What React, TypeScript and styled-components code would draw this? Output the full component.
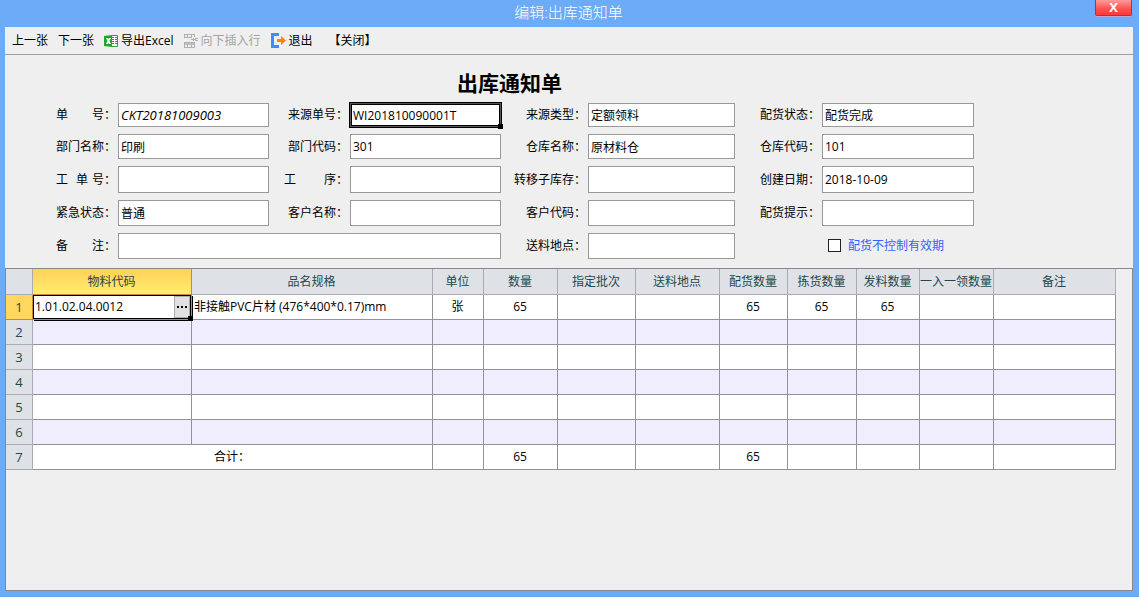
import React from "react";
import styled, { createGlobalStyle, css } from "styled-components";

const GlobalStyle = createGlobalStyle`
  *, *::before, *::after { box-sizing: border-box; }
  body {
    margin: 0;
    background: #fff;
    color: #000;
    font: 12px/16px "Open Sans", "Noto Sans CJK SC", sans-serif;
  }
  button, input { font: inherit; color: inherit; }
`;

const Window = styled.div`
  display: flex;
  flex-direction: column;
  min-height: calc(100vh - 1px);
  padding: 0 6px 6px 5px;
  background: #6cabf7;
`;

const TitleBar = styled.header`
  display: grid;
  grid-template-columns: 37px 1fr 37px;
  height: 27px;
  padding-right: 1px;
`;

const WindowTitle = styled.div`
  grid-column: 2;
  color: #fff;
  font-size: 15px;
  font-weight: 300;
  line-height: 24px;
  text-align: center;
`;

const CloseButton = styled.button`
  height: 16px;
  padding: 0;
  border: 1px solid #f01818;
  border-top: 0;
  border-radius: 0 0 2px 2px;
  background: linear-gradient(#ff9a9a, #fd5050 60%, #fb3a3a);
  box-shadow: 0 1px 0 #b9a9d6;
  color: #fff;
  font-size: 13px;
  font-weight: 700;
  line-height: 15px;
`;

const Content = styled.main`
  display: flex;
  flex: 1;
  flex-direction: column;
  background: #efefef;
`;

const Toolbar = styled.nav`
  display: flex;
  align-items: center;
  gap: 10px;
  height: 28px;
  padding-left: 7px;
  border-bottom: 1px solid #a0a0a0;
`;

const ToolButton = styled.button<{ $apart?: boolean }>`
  display: flex;
  align-items: center;
  gap: 3px;
  margin: 0 0 0 ${(p) => (p.$apart ? "6px" : "0")};
  padding: 0;
  border: 0;
  background: none;
  white-space: nowrap;
  &:disabled { color: #a3a3a3; }
`;

const Heading = styled.h1`
  margin: 0;
  padding: 13px 119px 5px 0;
  font-size: 21px;
  font-weight: 700;
  line-height: 30px;
  text-align: center;
`;

const Form = styled.form`
  display: grid;
  grid-template-columns: 113px 151fr 81px 151fr 87px 147fr 87px 152fr;
  grid-template-rows: 24px 25px 27px 26px 26px;
  row-gap: 7px;
  padding: 0 159px 9px 0;
`;

const FieldLabel = styled.label`
  align-self: center;
  padding-right: 2px;
  text-align: right;
  white-space: pre;
`;

const FieldBox = styled.div<{ $wide?: boolean }>`
  position: relative;
  grid-column: span ${(p) => (p.$wide ? 3 : 1)};
`;

const activeFrame = css`
  border-color: #555;
  outline: 1px solid #000;
  box-shadow: inset 0 0 0 1px #000;
`;

const FieldInput = styled.input<{ $italic?: boolean; $active?: boolean }>`
  display: block;
  width: 100%;
  height: 100%;
  padding: 0 2px;
  border: 1px solid #999;
  border-radius: 0;
  outline: 0;
  background: #fff;
  ${(p) =>
    p.$italic &&
    css`
      font-size: 13px;
      font-style: italic;
    `}
  ${(p) => p.$active && activeFrame}
`;

const FillHandle = styled.span`
  position: absolute;
  right: -2px;
  bottom: -2px;
  z-index: 1;
  width: 5px;
  height: 5px;
  background: #000;
`;

const CheckLabel = styled.label`
  display: flex;
  align-items: center;
  gap: 7px;
  grid-column: span 2;
  padding: 0 0 1px 93px;
  color: #3562ff;
  white-space: nowrap;
`;

const CheckBox = styled.input`
  width: 13px;
  height: 13px;
  margin: 0;
  border: 1px solid #222;
  appearance: none;
  background: #fff;
  &:checked { background: #3562ff; }
`;

const GridPanel = styled.section`
  flex: 1;
  padding-right: 16px;
  border: 1px solid #888;
`;

const Table = styled.table`
  width: 100%;
  border-collapse: separate;
  border-spacing: 0;
  table-layout: fixed;
`;

const Col = styled.col<{ $width?: number }>`
  width: ${(p) => (p.$width ? `${p.$width}px` : "auto")};
`;

const HeadCell = styled.th<{ $active?: boolean }>`
  height: 26px;
  padding: 0 1px 0 0;
  border: solid #a9adb3;
  border-width: 0 1px 1px 0;
  background: #dee2e7;
  color: #24474a;
  font-weight: 400;
  white-space: nowrap;
  ${(p) =>
    p.$active &&
    css`
      border-color: #c58b38;
      background: linear-gradient(#ffd157, #ffec6e);
    `}
`;

const RowHead = styled.th<{ $active?: boolean }>`
  height: 25px;
  padding: 0;
  border: solid #a9adb3;
  border-width: 0 1px 1px 0;
  background: #dee2e7;
  color: #24474a;
  font-size: 13px;
  font-weight: 400;
  ${(p) =>
    p.$active &&
    css`
      border-color: #c58b38;
      background: #ffd75f;
    `}
`;

const Cell = styled.td<{ $left?: boolean }>`
  position: relative;
  padding: ${(p) => (p.$left ? "0 0 0 2px" : "0 1px 0 0")};
  border: solid #929298;
  border-width: 0 1px 1px 0;
  text-align: ${(p) => (p.$left ? "left" : "center")};
  white-space: nowrap;
`;

const Row = styled.tr<{ $tinted?: boolean }>`
  background: ${(p) => (p.$tinted ? "#efedfe" : "#fff")};
`;

const EditCell = styled(Cell)`
  padding: 0;
  box-shadow: 1px 1px 0 #000;
`;

const Editor = styled.div`
  display: flex;
  height: 24px;
  border: 1px solid #000;
`;

const EditorInput = styled.input`
  flex: 1;
  min-width: 0;
  padding: 0 1px;
  border: 0;
  outline: 0;
  background: #fff;
`;

const MoreButton = styled.button`
  display: flex;
  align-items: center;
  justify-content: center;
  width: 16px;
  padding: 0;
  border: 1px solid #adadad;
  background: #e1e1e1;
`;

const ExcelIcon = () => (
  <svg width="14" height="12" viewBox="0 0 14 12" aria-hidden="true">
    <path d="M8 .5h5.500v11H8" fill="#fff" stroke="#22a52c" />
    <path d="M8 2.500h2M8 4.500h2M8 6.500h2M8 8.500h2M11 2.500h2M11 4.500h2M11 6.500h2M11 8.500h2" stroke="#22a52c" />
    <path d="M0 1 8 0v12L0 11z" fill="#22a52c" />
    <path d="M2 3h2l.5 1.500L5 3h2L5.500 6 7 9H5l-.5-1.500L4 9H2l1.500-3z" fill="#fff" />
  </svg>
);

const InsertRowIcon = () => (
  <svg width="14" height="14" viewBox="0 0 14 14" shapeRendering="crispEdges" aria-hidden="true">
    <path d="M0 .5h11M0 3.5h7M.5 0v4M3.5 0v4M7.5 0v4M10.5 0v3" fill="none" stroke="#b0b0b0" />
    <path d="M7 5.5h5M11.500 4v3M12 4.5h2M12 6.5h2M9.500 4v3" fill="none" stroke="#b0b0b0" />
    <path d="M0 8h11v3H0z" fill="#c0c0c0" />
    <path d="M.5 8.500v5h10v-5zM3.5 10v3M7.5 10v3" fill="none" stroke="#b0b0b0" />
  </svg>
);

const ExitIcon = () => (
  <svg width="15" height="15" viewBox="0 0 15 15" aria-hidden="true">
    <path d="M0 0h8v3H3v9h5v3H0z" fill="#3f8ef7" />
    <path d="M6 6h4V3l5 4.5-5 4.500V9H6z" fill="#ff8500" />
  </svg>
);

const DotsIcon = () => (
  <svg width="10" height="2" viewBox="0 0 10 2" shapeRendering="crispEdges" aria-hidden="true">
    <path d="M0 0h2v2H0zM4 0h2v2H4zM8 0h2v2H8z" fill="#000" />
  </svg>
);

type Field = { id: string; label: string; value?: string; italic?: boolean; active?: boolean; wide?: boolean };

const fields: Field[] = [
  { id: "no", label: "单\u3000\u3000号：", value: "CKT20181009003", italic: true },
  { id: "source-no", label: "来源单号：", value: "WI201810090001T", active: true },
  { id: "source-type", label: "来源类型：", value: "定额领料" },
  { id: "pick-state", label: "配货状态：", value: "配货完成" },
  { id: "dept-name", label: "部门名称：", value: "印刷" },
  { id: "dept-code", label: "部门代码：", value: "301" },
  { id: "store-name", label: "仓库名称：", value: "原材料仓" },
  { id: "store-code", label: "仓库代码：", value: "101" },
  { id: "work-no", label: "工\u2004\u2004单\u2004号：" },
  { id: "process", label: "工\u3000\u3000\u2004序：" },
  { id: "sub-store", label: "转移子库存：" },
  { id: "created", label: "创建日期：", value: "2018-10-09" },
  { id: "urgency", label: "紧急状态：", value: "普通" },
  { id: "customer", label: "客户名称：" },
  { id: "customer-code", label: "客户代码：" },
  { id: "pick-hint", label: "配货提示：" },
  { id: "remark", label: "备\u3000\u3000注：", wide: true },
  { id: "place", label: "送料地点：" },
];

const columns: { title: string; width?: number }[] = [
  { title: "物料代码", width: 159 },
  { title: "品名规格", width: 241 },
  { title: "单位", width: 51 },
  { title: "数量", width: 74 },
  { title: "指定批次", width: 78 },
  { title: "送料地点", width: 84 },
  { title: "配货数量", width: 68 },
  { title: "拣货数量", width: 69 },
  { title: "发料数量", width: 63 },
  { title: "一入一领数量", width: 74 },
  { title: "备注" },
];

const firstRow = ["张", "65", "", "", "65", "65", "65", "", ""];
const totals = ["", "65", "", "", "65", "", "", "", ""];

export default function App() {
  return (
    <>
      <GlobalStyle />
      <Window>
        <TitleBar>
          <WindowTitle>编辑:出库通知单</WindowTitle>
          <CloseButton type="button" aria-label="关闭窗口">X</CloseButton>
        </TitleBar>
        <Content>
          <Toolbar>
            <ToolButton type="button">上一张</ToolButton>
            <ToolButton type="button">下一张</ToolButton>
            <ToolButton type="button"><ExcelIcon />导出Excel</ToolButton>
            <ToolButton type="button" disabled><InsertRowIcon />向下插入行</ToolButton>
            <ToolButton type="button"><ExitIcon />退出</ToolButton>
            <ToolButton type="button" $apart>【关闭】</ToolButton>
          </Toolbar>
          <Heading>出库通知单</Heading>
          <Form>
            {fields.map((f) => (
              <React.Fragment key={f.id}>
                <FieldLabel htmlFor={f.id}>{f.label}</FieldLabel>
                <FieldBox $wide={f.wide}>
                  <FieldInput id={f.id} defaultValue={f.value} $italic={f.italic} $active={f.active} />
                  {f.active && <FillHandle />}
                </FieldBox>
              </React.Fragment>
            ))}
            <CheckLabel>
              <CheckBox type="checkbox" />
              配货不控制有效期
            </CheckLabel>
          </Form>
          <GridPanel>
            <Table>
              <colgroup>
                <Col $width={27} />
                {columns.map((c) => <Col key={c.title} $width={c.width} />)}
              </colgroup>
              <thead>
                <tr>
                  <HeadCell />
                  {columns.map((c, i) => (
                    <HeadCell key={c.title} scope="col" $active={i === 0}>{c.title}</HeadCell>
                  ))}
                </tr>
              </thead>
              <tbody>
                <Row>
                  <RowHead scope="row" $active>1</RowHead>
                  <EditCell>
                    <Editor>
                      <EditorInput aria-label="物料代码" defaultValue="1.01.02.04.0012" />
                      <MoreButton type="button" aria-label="选择物料"><DotsIcon /></MoreButton>
                    </Editor>
                    <FillHandle />
                  </EditCell>
                  <Cell $left>非接触PVC片材 (476*400*0.17)mm</Cell>
                  {firstRow.map((v, i) => <Cell key={i}>{v}</Cell>)}
                </Row>
                {[2, 3, 4, 5, 6].map((n) => (
                  <Row key={n} $tinted={n % 2 === 0}>
                    <RowHead scope="row">{n}</RowHead>
                    {columns.map((c) => <Cell key={c.title} />)}
                  </Row>
                ))}
                <Row>
                  <RowHead scope="row">7</RowHead>
                  <Cell colSpan={2}>合计：</Cell>
                  {totals.map((v, i) => <Cell key={i}>{v}</Cell>)}
                </Row>
              </tbody>
            </Table>
          </GridPanel>
        </Content>
      </Window>
    </>
  );
}
